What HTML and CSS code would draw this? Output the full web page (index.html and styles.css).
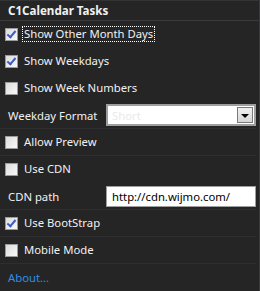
FILE: index.html
```html
<!DOCTYPE html>
<html>
<head>
<meta charset="utf-8">
<link rel="stylesheet" href="styles.css">
</head>
<body>
<div class="panel">
  <div class="header">C1Calendar Tasks</div>
  <div class="row"><span class="cb on"></span><span class="label focus">Show Other Month Days</span></div>
  <div class="row"><span class="cb on"></span><span class="label">Show Weekdays</span></div>
  <div class="row"><span class="cb"></span><span class="label">Show Week Numbers</span></div>
  <div class="row field sep"><span class="flabel">Weekday Format</span>
    <div class="select"><span class="ph">Short</span><span class="btn"><span class="tri"></span></span></div>
  </div>
  <div class="row sep"><span class="cb"></span><span class="label">Allow Preview</span></div>
  <div class="row"><span class="cb"></span><span class="label">Use CDN</span></div>
  <div class="row field sep"><span class="flabel">CDN path</span>
    <div class="input">http://cdn.wijmo.com/</div>
  </div>
  <div class="row sep"><span class="cb on"></span><span class="label">Use BootStrap</span></div>
  <div class="row sep"><span class="cb"></span><span class="label">Mobile Mode</span></div>
  <div class="row"><span class="link">About...</span></div>
</div>
</body>
</html>
```

FILE: styles.css
```css
html, body {
  margin: 0;
  padding: 0;
  background: #252526;
}
.panel {
  width: 259px;
  height: 290px;
  border-top: 1px solid #333336;
  border-right: 1px solid #3a3a3c;
  border-bottom: 1px solid #2e2e30;
  background: #252526;
  font-family: "Noto Sans", "Open Sans", sans-serif;
  font-size: 11.3px;
  color: #f1f1f1;
  display: flex;
  flex-direction: column;
}
.header {
  height: 20px;
  line-height: 19px;
  padding-left: 8px;
  font-size: 11.6px;
  font-weight: bold;
  border-bottom: 1px solid #3a3a3c;
}
.row {
  height: 26px;
  flex: 0 0 26px;
  display: flex;
  align-items: center;
  padding-left: 5px;
  margin-right: 3px;
  border-bottom: 1px solid transparent;
}
.row.sep {
  border-bottom-color: #2e2e30;
}
.cb {
  width: 11px;
  height: 11px;
  border: 1px solid #9a9a9a;
  background: linear-gradient(135deg, #dcdcdc, #f8f8f8);
  position: relative;
  flex: 0 0 auto;
}
.cb.on::after {
  content: "";
  position: absolute;
  left: 3px;
  top: 0px;
  width: 3px;
  height: 7px;
  border-right: 2px solid #3c5cc4;
  border-bottom: 2px solid #3c5cc4;
  transform: rotate(40deg);
}
.label {
  margin-left: 4px;
  padding: 0 1px;
  line-height: 14px;
  border: 1px dotted transparent;
}
.label.focus {
  border: 1px dotted #ffffff;
}
.field {
  padding-left: 8px;
}
.flabel {
  width: 98px;
  flex: 0 0 98px;
}
.select {
  width: 147px;
  height: 18px;
  border: 2px solid #9e9e9e;
  background: #ffffff;
  display: flex;
  align-items: center;
  justify-content: space-between;
}
.ph {
  color: #eaeaea;
  padding-left: 4px;
}
.btn {
  width: 14px;
  height: 14px;
  border: 1px solid #7a7a7a;
  margin-right: 1px;
  background: linear-gradient(#f0f0f0, #d6d6d6);
  display: flex;
  align-items: center;
  justify-content: center;
}
.tri {
  width: 0;
  height: 0;
  border-left: 4px solid transparent;
  border-right: 4px solid transparent;
  border-top: 4px solid #000;
  margin-top: 1px;
}
.input {
  width: 143px;
  height: 19px;
  line-height: 19px;
  border: 1px solid #9e9e9e;
  background: #ffffff;
  color: #000;
  padding-left: 5px;
}
.link {
  padding-left: 3px;
  color: #2f8ee8;
}
```
